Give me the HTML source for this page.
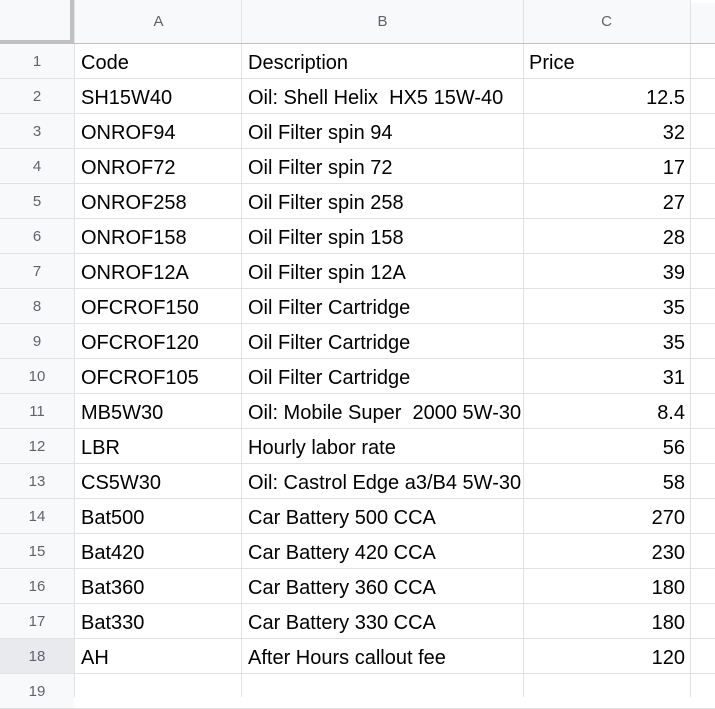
<!DOCTYPE html><html><head><style>
body{margin:0;width:715px;height:697px;overflow:hidden;background:#fff;font-family:"Liberation Sans",Arial,sans-serif;position:relative}
.h{position:absolute;background:#f8f9fa;color:#5f6368;font-size:15px;display:flex;align-items:center;justify-content:center;box-sizing:border-box}
.c{position:absolute;font-size:20px;color:#000;box-sizing:border-box;padding:2px 5px 0 6px;white-space:pre;overflow:hidden;line-height:35px;height:34px}
.vl{position:absolute;top:0;width:1px;height:697px;background:#e2e2e2}
.hl{position:absolute;left:0;height:1px;width:715px;background:#e2e2e2}
</style></head><body>
<div class="h" style="left:0;top:0;width:715px;height:44px;border-top:3px solid #fff"></div>
<div class="h" style="left:0;top:0;width:74px;height:44px;border-right:4px solid #c0c0c0;border-bottom:4px solid #c0c0c0;background:#f8f9fa"></div>
<div class="h" style="left:75px;top:0;width:167px;height:43px">A</div>
<div class="h" style="left:242px;top:0;width:281px;height:43px">B</div>
<div class="h" style="left:523px;top:0;width:167px;height:43px">C</div>
<div class="h" style="left:0;top:44px;width:74px;height:653px"></div>
<div class="h" style="left:0;top:639px;width:74px;height:34px;background:#e8eaed"></div>
<div id="g"></div>
<div class="vl" style="left:74px"></div><div class="vl" style="left:241px"></div><div class="vl" style="left:523px"></div><div class="vl" style="left:690px"></div>
<div class="hl" style="top:43px;background:#c0c0c0"></div>
<script>
var d=[["Code","Description","Price"],["SH15W40","Oil: Shell Helix  HX5 15W-40","12.5"],["ONROF94","Oil Filter spin 94","32"],["ONROF72","Oil Filter spin 72","17"],["ONROF258","Oil Filter spin 258","27"],["ONROF158","Oil Filter spin 158","28"],["ONROF12A","Oil Filter spin 12A","39"],["OFCROF150","Oil Filter Cartridge","35"],["OFCROF120","Oil Filter Cartridge","35"],["OFCROF105","Oil Filter Cartridge","31"],["MB5W30","Oil: Mobile Super  2000 5W-30","8.4"],["LBR","Hourly labor rate","56"],["CS5W30","Oil: Castrol Edge a3/B4 5W-30","58"],["Bat500","Car Battery 500 CCA","270"],["Bat420","Car Battery 420 CCA","230"],["Bat360","Car Battery 360 CCA","180"],["Bat330","Car Battery 330 CCA","180"],["AH","After Hours callout fee","120"],["","",""]];
var h="";
for(var i=0;i<19;i++){var t=44+35*i;
h+='<div class="h" style="left:0;top:'+t+'px;width:74px;height:34px'+(i==17?';background:#e8eaed':'')+'">'+(i+1)+'</div>';
h+='<div class="c" style="left:75px;top:'+t+'px;width:166px">'+d[i][0]+'</div>';
h+='<div class="c" style="left:242px;top:'+t+'px;width:281px">'+d[i][1]+'</div>';
h+='<div class="c" style="left:523px;top:'+t+'px;width:167px;text-align:'+(i?'right':'left')+'">'+d[i][2]+'</div>';
h+='<div class="hl" style="top:'+(t+34)+'px"></div>';}
document.getElementById("g").innerHTML=h;
</script>
</body></html>
